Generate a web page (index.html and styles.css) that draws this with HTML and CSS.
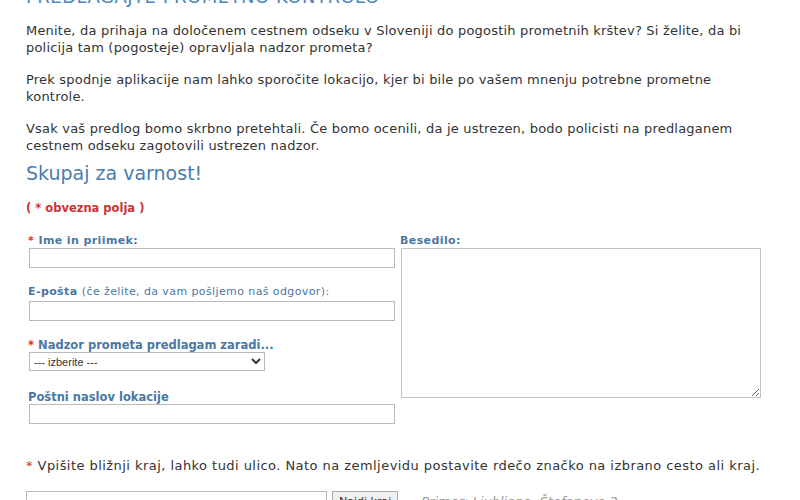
FILE: index.html
```html
<!DOCTYPE html>
<html lang="sl">
<head>
  <meta charset="UTF-8">
  <title>Predlagajte prometno kontrolo</title>
  <link rel="stylesheet" href="styles.css">
</head>
<body>
  <div class="page">
    <h1 class="page-title">Predlagajte prometno kontrolo</h1>

    <p class="intro">Menite, da prihaja na določenem cestnem odseku v Sloveniji do pogostih prometnih krštev? Si želite, da bi policija tam (pogosteje) opravljala nadzor prometa?</p>
    <p class="intro">Prek spodnje aplikacije nam lahko sporočite lokacijo, kjer bi bile po vašem mnenju potrebne prometne kontrole.</p>
    <p class="intro">Vsak vaš predlog bomo skrbno pretehtali. Če bomo ocenili, da je ustrezen, bodo policisti na predlaganem cestnem odseku zagotovili ustrezen nadzor.</p>

    <h2 class="form-title">Skupaj za varnost!</h2>
    <div class="required-note">( * obvezna polja )</div>

    <form class="suggest-form">
      <div class="form-left">
        <div class="form-group">
          <label class="form-label"><span class="star">*</span> Ime in priimek:</label>
          <input class="form-input" type="text">
        </div>
        <div class="form-group">
          <label class="form-label spaced">E-pošta <span class="hint">(če želite, da vam pošljemo naš odgovor):</span></label>
          <input class="form-input" type="text">
        </div>
        <div class="form-group wide">
          <label class="form-label big"><span class="star">*</span> Nadzor prometa predlagam zaradi...</label>
          <select class="form-select">
            <option>--- izberite ---</option>
          </select>
        </div>
        <div class="form-group last">
          <label class="form-label big">Poštni naslov lokacije</label>
          <input class="form-input" type="text">
        </div>
      </div>
      <div class="form-right">
        <label class="form-label">Besedilo:</label>
        <textarea class="form-textarea"></textarea>
      </div>
    </form>

    <p class="map-note"><span class="star">*</span> Vpišite bližnji kraj, lahko tudi ulico. Nato na zemljevidu postavite rdečo značko na izbrano cesto ali kraj.</p>

    <div class="search-row">
      <input class="search-input" type="text">
      <button class="search-button" type="button">Najdi kraj</button>
      <span class="search-example">Primer: Ljubljana, Štefanova 2</span>
    </div>
  </div>
</body>
</html>
```

FILE: styles.css
```css
html, body {
  margin: 0;
  padding: 0;
  width: 100%;
  height: 100%;
  overflow: hidden;
  background-color: #fff;
}

.page {
  font-family: "DejaVu Sans", Verdana, sans-serif;
  color: #333;
  padding: 0 26px;
}

.page-title {
  margin: -13px 0 0;
  font-size: 18px;
  font-weight: normal;
  text-transform: uppercase;
  letter-spacing: 0.5px;
  color: #4a86c0;
  line-height: 20px;
}

.intro {
  font-size: 13px;
  letter-spacing: 0.2px;
  line-height: 17px;
  margin: 15px 0 0;
}

.form-title {
  margin: 7px 0 0;
  font-size: 19px;
  font-weight: normal;
  color: #4a7db0;
  line-height: 24px;
}

.required-note {
  margin-top: 16px;
  font-size: 11.5px;
  font-weight: bold;
  color: #cc3333;
}

.suggest-form {
  display: flex;
  gap: 6px;
  margin-top: 19px;
  padding-left: 2px;
}

.form-left {
  width: 366px;
}

.form-right {
  display: flex;
  flex-direction: column;
}

.form-group {
  margin-bottom: 17px;
}

.form-group.wide {
  margin-bottom: 19px;
}

.form-group.last {
  margin-bottom: 0;
}

.form-label {
  display: block;
  font-size: 11px;
  font-weight: bold;
  letter-spacing: 0.4px;
  color: #4a77a3;
  line-height: 14px;
  margin-bottom: 0;
}

.form-label.spaced {
  margin-bottom: 2px;
}

.form-label.big {
  font-size: 11.5px;
  letter-spacing: 0;
}

.form-label .hint {
  font-weight: normal;
}

.star {
  color: #cc3333;
}

.form-input {
  display: block;
  width: 366px;
  height: 20px;
  box-sizing: border-box;
  border: 1px solid #b8b8b8;
  background-color: #fff;
  margin-left: 1px;
}

.form-select {
  display: block;
  width: 236px;
  height: 19px;
  margin-left: 1px;
  font-family: "Liberation Sans", Arial, sans-serif;
  font-size: 11px;
  color: #333;
  border: 1px solid #b8b8b8;
  background-color: #fff;
}

.form-textarea {
  width: 360px;
  height: 150px;
  box-sizing: border-box;
  border: 1px solid #c4c4c4;
  margin-left: 1px;
  resize: both;
}

.map-note {
  margin: 33px 0 0;
  font-size: 13px;
  letter-spacing: 0.45px;
  line-height: 17px;
}

.search-row {
  display: flex;
  align-items: center;
  margin-top: 17px;
}

.search-input {
  width: 301px;
  height: 20px;
  box-sizing: border-box;
  border: 1px solid #b8b8b8;
}

.search-button {
  margin-left: 5px;
  height: 20px;
  font-family: "DejaVu Sans", Verdana, sans-serif;
  font-size: 11px;
  color: #333;
  background-color: #f0f0f0;
  border: 1px solid #aaa;
  padding: 0 6px;
}

.search-example {
  margin-left: 23px;
  font-size: 13px;
  font-style: italic;
  color: #999;
}
```
